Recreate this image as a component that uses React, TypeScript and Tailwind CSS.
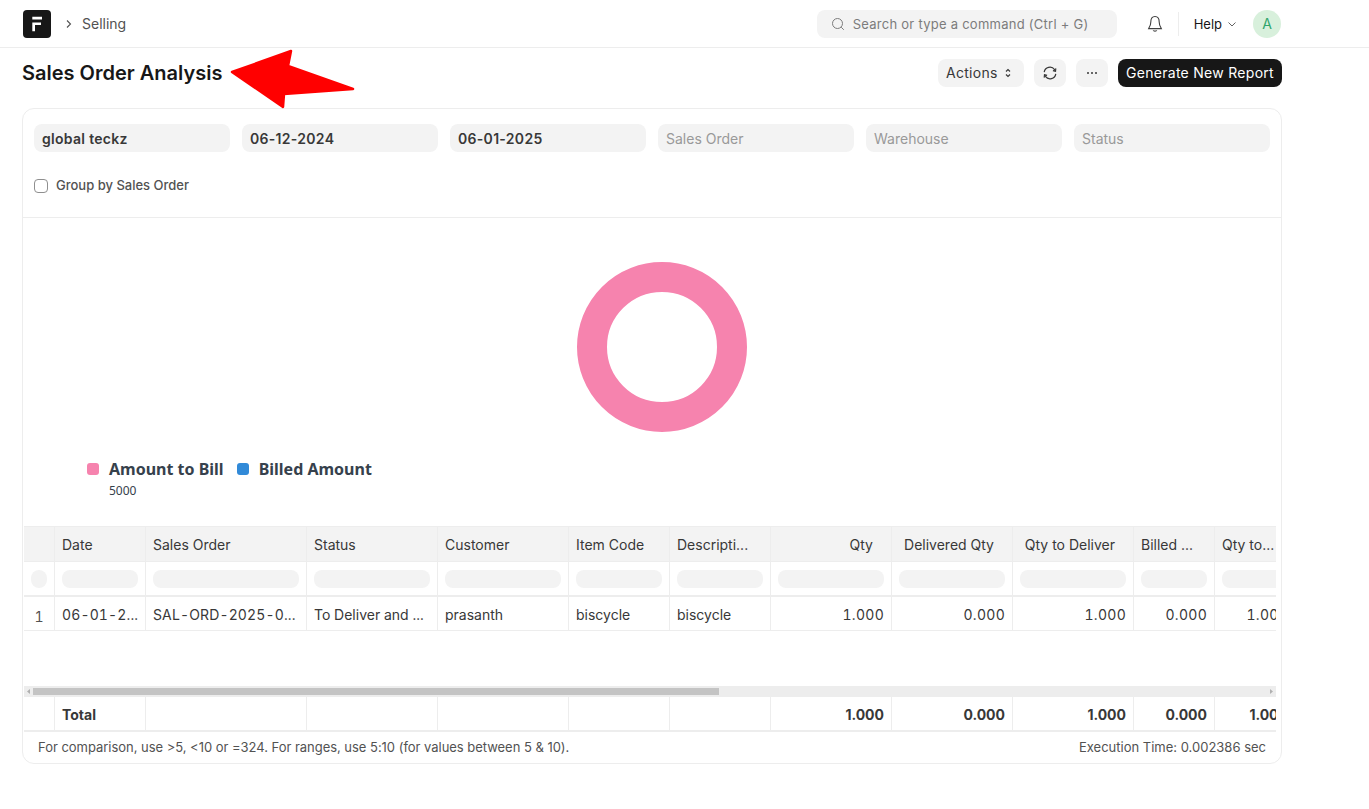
import React from "react";

const W = ["w-[31px]","w-[91px]","w-[161px]","w-[131px]","w-[131px]","w-[101px]","w-[101px]","w-[121px]","w-[121px]","w-[121px]","w-[81px]","w-[81px]"];
const heads = ["","Date","Sales Order","Status","Customer","Item Code","Descripti...","Qty","Delivered Qty","Qty to Deliver","Billed ...","Qty to..."];
const heads2 = [false,false,false,false,false,false,false,true,true,true,false,false];
const vals = ["1","06-01-2...","SAL-ORD-2025-0...","To Deliver and ...","prasanth","biscycle","biscycle","1.000","0.000","1.000","0.000","1.000"];
const totals = ["","Total","","","","","","1.000","0.000","1.000","0.000","1.000"];

function Field({ v, ph }: { v?: string; ph?: string }) {
  return (
    <div className={"w-[196px] h-7 rounded-lg bg-[#f3f3f3] px-2 pt-[1px] flex items-center text-sm " + (v ? "font-semibold tracking-[0.3px] text-[#383838]" : "text-[#999999]")}>
      {v || ph}
    </div>
  );
}

function Arrow() {
  return (
    <svg className="absolute left-[225px] top-[45px]" width="135" height="70" viewBox="225 45 135 70">
      <path d="M232 72 L291 51 L288 66 L353 89 L284 94 L283 107 Z" fill="#ff0000" stroke="#ff0000" strokeWidth="2.5" strokeLinejoin="round" />
    </svg>
  );
}

export default function App() {
  return (
    <div className="relative w-[1369px] h-[809px] bg-white overflow-hidden font-['Inter',sans-serif] text-[#383838]">
      <header className="h-12 border-b border-[#ededed] pl-[23px] pr-[88px] flex items-center">
        <svg width="28" height="28" viewBox="0 0 28 28">
          <rect width="28" height="28" rx="4" fill="#171717" />
          <path d="M9.3 6.8 H19 V9.5 H9.3 Z M9.3 12.6 H18 V15 H12 V21.3 H9.3 Z" fill="#ffffff" />
        </svg>
        <svg className="ml-[14px]" width="8" height="10" viewBox="0 0 8 10" fill="none" stroke="#525252" strokeWidth="1.1"><path d="M2 1.5 L5.5 5 L2 8.5" /></svg>
        <span className="ml-[9px] text-sm text-[#525252]">Selling</span>
        <div className="ml-auto w-[300px] h-7 rounded-lg bg-[#f3f3f3] flex items-center pl-[14px] text-[#7c7c7c]">
          <svg width="14" height="14" viewBox="0 0 14 14" fill="none" stroke="#7c7c7c" strokeWidth="1"><circle cx="6.5" cy="6.5" r="5" /><path d="M10.2 10.2 L12.8 12.8" /></svg>
          <span className="ml-[8px] pt-[2px] text-[13px] tracking-[0.26px]">Search or type a command (Ctrl + G)</span>
        </div>
        <svg className="ml-[29px]" width="18" height="18" viewBox="0 0 18 18" fill="none" stroke="#404040" strokeWidth="1.1"><path d="M9 1.5 C6 1.5 4.8 4 4.8 7 C4.8 10.5 3.2 12.2 2.6 13.6 H15.4 C14.8 12.2 13.2 10.5 13.2 7 C13.2 4 12 1.5 9 1.5 Z" /><path d="M7.2 15.4 C7.6 16.4 10.4 16.4 10.8 15.4" /></svg>
        <div className="ml-[14px] w-px h-6 bg-[#ededed]" />
        <span className="ml-[15px] pt-[2px] text-[13px] text-[#171717]">Help</span>
        <svg className="ml-[5px]" width="10" height="10" viewBox="0 0 10 10" fill="none" stroke="#525252" strokeWidth="0.9"><path d="M1.5 3.5 L5 7 L8.5 3.5" /></svg>
        <div className="ml-[16px] w-7 h-7 rounded-full bg-[#d8f0dc] flex items-center justify-center text-sm text-[#30a66d]">A</div>
      </header>

      <div className="w-[1260px] ml-[22px]">
        <div className="h-[60px] flex items-center pb-[10px]">
          <h1 className="text-xl font-semibold text-[#171717]">Sales Order Analysis</h1>
          <div className="ml-auto h-7 w-[86px] rounded-lg bg-[#f3f3f3] flex items-center pl-2 text-sm text-[#383838] tracking-[0.28px]">
            Actions
            <svg className="ml-[6px]" width="8" height="12" viewBox="0 0 8 12" fill="none" stroke="#383838" strokeWidth="1.2"><path d="M2 4.5 L4 2.5 L6 4.5 M2 7.5 L4 9.5 L6 7.5" /></svg>
          </div>
          <div className="ml-[10px] h-7 w-8 rounded-lg bg-[#f3f3f3] flex items-center justify-center">
            <svg width="16" height="16" viewBox="0 0 16 16" fill="none" stroke="#383838" strokeWidth="1.2"><path d="M2.2 7.2 A5.8 5.8 0 0 1 12.6 4.6 L13.5 6.2 M13.8 8.8 A5.8 5.8 0 0 1 3.4 11.4 L2.5 9.8" /><path d="M13.8 3.4 L13.5 6.2 L10.9 5.6 M2.2 12.6 L2.5 9.8 L5.1 10.4" /></svg>
          </div>
          <div className="ml-[10px] h-7 w-8 rounded-lg bg-[#f3f3f3] flex items-center justify-center gap-[2px]">
            <span className="w-[2px] h-[2px] rounded-full bg-[#383838]" /><span className="w-[2px] h-[2px] rounded-full bg-[#383838]" /><span className="w-[2px] h-[2px] rounded-full bg-[#383838]" />
          </div>
          <div className="ml-[10px] h-7 w-[164px] rounded-lg bg-[#171717] text-white text-sm tracking-[0.28px] flex items-center justify-center">Generate New Report</div>
        </div>

        <div className="h-[656px] rounded-xl border border-[#ededed] flex flex-col overflow-hidden">
          <div className="h-[109px] border-b border-[#ededed] px-[11px] pt-[15px] shrink-0">
            <div className="flex gap-3">
              <Field v="global teckz" /><Field v="06-12-2024" /><Field v="06-01-2025" />
              <Field ph="Sales Order" /><Field ph="Warehouse" /><Field ph="Status" />
            </div>
            <div className="mt-[27px] flex items-center">
              <span className="w-[14px] h-[14px] rounded-[4px] border border-[#8f8f8f] bg-white" />
              <span className="ml-2 text-[13px] leading-[14px] -mt-[3px] font-medium text-[#525252]">Group by Sales Order</span>
            </div>
          </div>

          <div className="h-[308px] shrink-0 relative">
            <div className="pt-[44px] flex justify-center pl-[19px]">
              <svg width="170" height="170" viewBox="0 0 170 170"><circle cx="85" cy="85" r="70" fill="none" stroke="#f683ae" strokeWidth="30" /></svg>
            </div>
            <div className="mt-[26px] ml-[64px] flex items-start">
              <span className="mt-[5px] w-3 h-3 rounded-[3px] bg-[#f683ae]" />
              <div className="ml-[10px]">
                <div className="text-base font-bold leading-[22px] font-['Noto_Sans',sans-serif] text-[#36414c]">Amount to Bill</div>
                <div className="mt-[3px] text-xs leading-[15px] font-['Noto_Sans',sans-serif] text-[#36414c]">5000</div>
              </div>
              <span className="ml-[13px] mt-[5px] w-3 h-3 rounded-[3px] bg-[#318ad8]" />
              <div className="ml-[10px] text-base font-bold leading-[22px] font-['Noto_Sans',sans-serif] text-[#36414c]">Billed Amount</div>
            </div>
          </div>

          <div className="mx-[1px] mr-[5px] overflow-hidden flex flex-col h-[205px] text-sm shrink-0 border-t border-[#ededed]">
            <div className="flex h-[35px] bg-[#f3f3f3] border-b border-[#ededed] shrink-0">
              {heads.map((h, i) => (
                <div key={i} className={W[i] + " shrink-0 border-r border-[#ededed] px-[7px] pt-[2px] flex items-center whitespace-nowrap " + (heads2[i] ? "justify-end pr-[18px]" : "")}>{h}</div>
              ))}
            </div>
            <div className="flex h-[35px] border-b-2 border-[#ededed] shrink-0">
              {heads.map((h, i) => (
                <div key={i} className={W[i] + " shrink-0 border-r border-[#ededed] px-[7px] flex items-center"}>
                  <div className={i === 0 ? "w-4 h-[18px] mx-auto rounded-full bg-[#f3f3f3]" : "w-full h-[18px] rounded-lg bg-[#f3f3f3]"} />
                </div>
              ))}
            </div>
            <div className="flex h-[34px] border-b border-[#ededed] shrink-0">
              {vals.map((v, i) => (
                <div key={i} className={W[i] + " shrink-0 border-r border-[#ededed] px-[7px] pt-[2px] flex items-center whitespace-nowrap [font-variant-numeric:tabular-nums] " + (i === 0 ? "justify-center pt-[7px] text-[#525252]" : i >= 7 ? "justify-end tracking-[0.28px]" : i <= 2 ? "tracking-[0.14px]" : "")}>{v}</div>
              ))}
            </div>
            <div className="flex-1" />
          </div>

          <div className="mx-[1px] mr-[5px] h-[11px] bg-[#ededed] flex items-center shrink-0 relative -mt-[45px]">
            <svg className="ml-[3px]" width="3" height="5" viewBox="0 0 3 5"><path d="M3 0 V5 L0 2.5 Z" fill="#b0b0b0" /></svg>
            <div className="ml-[3px] w-[686px] h-[7px] bg-[#c4c4c4]" />
            <svg className="ml-auto mr-[3px]" width="3" height="5" viewBox="0 0 3 5"><path d="M0 0 V5 L3 2.5 Z" fill="#b0b0b0" /></svg>
          </div>
          <div className="mx-[1px] mr-[5px] overflow-hidden flex h-[35px] border-b-2 border-[#ededed] text-sm shrink-0 bg-white">
            {totals.map((v, i) => (
              <div key={i} className={W[i] + " shrink-0 border-r border-[#ededed] px-[7px] pt-[3px] flex items-center font-bold text-[#383838] whitespace-nowrap " + (i >= 7 ? "justify-end" : "")}>{v}</div>
            ))}
          </div>
          <div className="flex-1 flex items-center justify-between pl-[15px] pr-[15px] text-[13px] text-[#525252]">
            <span className="tracking-[-0.03px]">For comparison, use &gt;5, &lt;10 or =324. For ranges, use 5:10 (for values between 5 &amp; 10).</span>
            <span>Execution Time: 0.002386 sec</span>
          </div>
        </div>
      </div>
      <Arrow />
    </div>
  );
}
